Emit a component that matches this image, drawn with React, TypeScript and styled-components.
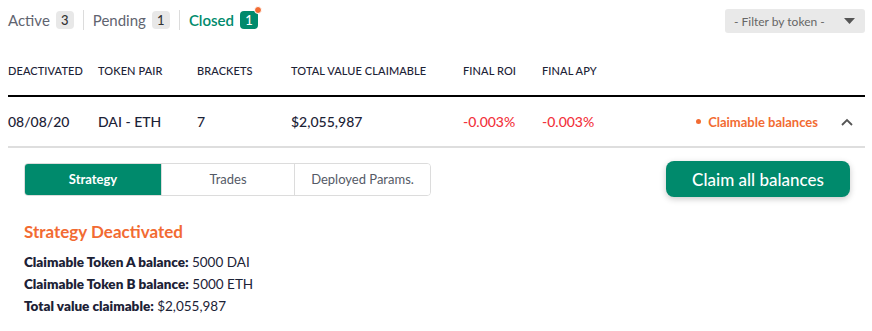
import * as React from 'react'
import styled, { createGlobalStyle } from 'styled-components'

// ___________________________________________________________________

const GREEN = '#008a6c'
const ORANGE = '#f26b32'
const RED = '#f2323c'
const INK = '#1c2236'

const Global = createGlobalStyle`
  body {
    margin: 0;
    background: #fff;
    font-family: Lato, 'Noto Sans', sans-serif;
    color: ${INK};
  }
`

const Page = styled.div`
  width: 872px;
  padding: 0 7px 0 8px;
  box-sizing: border-box;
`

const TopBar = styled.div`
  display: flex;
  align-items: center;
  justify-content: space-between;
  height: 39px;
`

const StatusTabs = styled.div`
  display: flex;
  align-items: center;
`

const StatusTab = styled.div<{ active?: boolean }>`
  display: flex;
  align-items: center;
  gap: 6px;
  font-size: 15px;
  font-weight: ${(p) => (p.active ? 600 : 400)};
  color: ${(p) => (p.active ? GREEN : '#5f6470')};
`

const Count = styled.span<{ active?: boolean }>`
  position: relative;
  display: inline-flex;
  align-items: center;
  justify-content: center;
  box-sizing: border-box;
  width: 18px;
  height: 18px;
  border-radius: 4px;
  font-size: 13px;
  font-weight: 500;
  background: ${(p) => (p.active ? GREEN : '#e8e8e8')};
  color: ${(p) => (p.active ? '#fff' : '#333')};
`

const Dot = styled.span`
  position: absolute;
  top: -5px;
  right: -4px;
  width: 6px;
  height: 6px;
  border-radius: 50%;
  background: ${ORANGE};
  border: 1px solid #fff;
`

const Divider = styled.span`
  width: 1px;
  height: 20px;
  background: #dcdcdc;
  margin: 0 9px;
`

const Filter = styled.div`
  display: flex;
  align-items: center;
  justify-content: space-between;
  width: 140px;
  height: 24px;
  padding: 0 10px 0 9px;
  margin-top: 3px;
  box-sizing: border-box;
  background: #e9e9e9;
  border-radius: 3px;
  font-size: 12px;
  color: #666;
`

const Grid = styled.div`
  display: grid;
  grid-template-columns: 90px 99px 94px 172px 79px 1fr auto 47px;
  align-items: center;
`

const HeadRow = styled(Grid)`
  height: 56px;
  border-bottom: 2px solid #000;
  font-size: 11px;
  font-weight: 500;
  text-transform: uppercase;
  letter-spacing: 0.1px;
  align-items: start;
  & > span {
    margin-top: 25px;
  }
`

const DataRow = styled(Grid)`
  height: 49px;
  border-bottom: 2px solid #dedede;
  font-size: 14px;
  font-weight: 500;
`

const Neg = styled.span`
  color: ${RED};
`

const Claimable = styled.span`
  display: flex;
  align-items: center;
  gap: 7px;
  color: ${ORANGE};
  font-size: 13px;
  font-weight: 700;
  &::before {
    content: '';
    width: 5px;
    height: 5px;
    border-radius: 50%;
    background: ${ORANGE};
  }
`

const Chevron = styled.span`
  display: flex;
  justify-content: flex-end;
  padding-right: 12px;
`

const Detail = styled.div`
  padding: 13px 15px 0 16px;
`

const ActionBar = styled.div`
  display: flex;
  justify-content: space-between;
  align-items: center;
`

const Segments = styled.div`
  display: flex;
  box-sizing: border-box;
  height: 33px;
  border: 1px solid #dcdcdc;
  border-radius: 4px;
  overflow: hidden;
`

const Segment = styled.div<{ active?: boolean; w: number }>`
  width: ${(p) => p.w}px;
  display: flex;
  align-items: center;
  justify-content: center;
  padding-bottom: 1px;
  font-size: 13px;
  font-weight: ${(p) => (p.active ? 700 : 400)};
  background: ${(p) => (p.active ? GREEN : '#fff')};
  color: ${(p) => (p.active ? '#fff' : '#555a66')};
  & + & {
    border-left: 1px solid #dcdcdc;
  }
`

const ClaimButton = styled.button`
  width: 184px;
  height: 36px;
  border: 0;
  border-radius: 8px;
  background: ${GREEN};
  color: #fff;
  font-family: inherit;
  font-size: 17px;
  font-weight: 500;
  box-shadow: 0 2px 6px rgba(0, 0, 0, 0.22);
`

const Title = styled.h3`
  margin: 24px 0 9px;
  color: ${ORANGE};
  font-size: 17px;
  font-weight: 700;
`

const Line = styled.p`
  margin: 0;
  line-height: 22px;
  font-size: 13.5px;
  b {
    font-weight: 800;
  }
`

const App = () => (
  <Page>
    <Global />
    <TopBar>
      <StatusTabs>
        <StatusTab>
          Active <Count>3</Count>
        </StatusTab>
        <Divider />
        <StatusTab>
          Pending <Count>1</Count>
        </StatusTab>
        <Divider />
        <StatusTab active>
          Closed
          <Count active>
            1<Dot />
          </Count>
        </StatusTab>
      </StatusTabs>
      <Filter>
        - Filter by token -
        <svg width="11" height="6" viewBox="0 0 11 6">
          <path d="M0 0h11L5.5 6z" fill="#555" />
        </svg>
      </Filter>
    </TopBar>

    <HeadRow>
      <span>Deactivated</span>
      <span>Token pair</span>
      <span>Brackets</span>
      <span>Total value claimable</span>
      <span>Final ROI</span>
      <span>Final APY</span>
      <span />
      <span />
    </HeadRow>

    <DataRow>
      <span>08/08/20</span>
      <span>DAI - ETH</span>
      <span>7</span>
      <span>$2,055,987</span>
      <Neg>-0.003%</Neg>
      <Neg>-0.003%</Neg>
      <Claimable>Claimable balances</Claimable>
      <Chevron>
        <svg width="12" height="8" viewBox="0 0 12 8">
          <path d="M1 7l5-5 5 5" fill="none" stroke="#555" strokeWidth="1.8" />
        </svg>
      </Chevron>
    </DataRow>

    <Detail>
      <ActionBar>
        <Segments>
          <Segment active w={136}>Strategy</Segment>
          <Segment w={132}>Trades</Segment>
          <Segment w={135}>Deployed Params.</Segment>
        </Segments>
        <ClaimButton>Claim all balances</ClaimButton>
      </ActionBar>

      <Title>Strategy Deactivated</Title>
      <Line>
        <b>Claimable Token A balance:</b> 5000 DAI
      </Line>
      <Line>
        <b>Claimable Token B balance:</b> 5000 ETH
      </Line>
      <Line>
        <b>Total value claimable:</b> $2,055,987
      </Line>
    </Detail>
  </Page>
)

export default App
